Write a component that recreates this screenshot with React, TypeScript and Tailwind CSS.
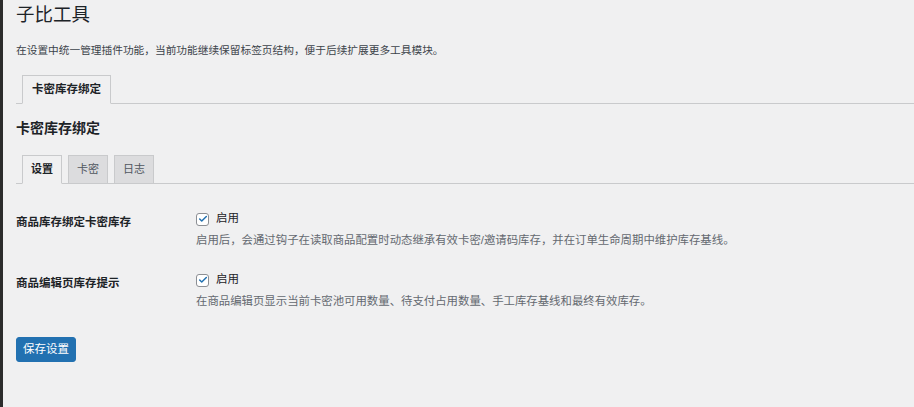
import { Check } from 'lucide-react'

const font = '[font-family:"Liberation_Sans","Noto_Sans_CJK_SC",sans-serif]'

function Checkbox() {
    return (
        <span className="w-[13px] h-[13px] shrink-0 rounded-[3px] border border-[#8c8f94] bg-white flex items-center justify-center">
            <Check size={10} strokeWidth={3.5} className="text-[#2271b1]" />
        </span>
    )
}

function SettingRow({ label, desc, first }: { label: string; desc: string; first?: boolean }) {
    return (
        <div className={`flex ${first ? '' : 'mt-[22px]'}`}>
            <div className="w-[180px] shrink-0 pt-[5px] text-[11.5px] leading-[16px] font-bold text-[#1d2327]">
                {label}
            </div>
            <div className="flex flex-col">
                <label className="h-[20px] flex items-center gap-[7px] text-[11.5px] text-[#1d2327]">
                    <Checkbox />
                    <span>启用</span>
                </label>
                <p className="mt-[3px] text-[11.4px] leading-[16px] text-[#646970]">{desc}</p>
            </div>
        </div>
    )
}

export default function App() {
    const tabs = ['设置', '卡密', '日志']

    return (
        <div className={`flex min-h-[407px] bg-[#f0f0f1] ${font}`}>
            {/* admin menu edge */}
            <div className="w-[3px] shrink-0 bg-[#2c2c2c]" />

            <div className="flex-1 pl-[13px]">
                <h1 className="mt-[2px] text-[18.5px] leading-[26px] font-normal text-[#1d2327]">子比工具</h1>
                <p className="mt-[14px] text-[10.7px] leading-[16px] text-[#3c434a]">
                    在设置中统一管理插件功能，当前功能继续保留标签页结构，便于后续扩展更多工具模块。
                </p>

                {/* top-level tab */}
                <div className="mt-[17px] flex border-b border-[#c9cacc]">
                    <div className="ml-[6px] -mb-px h-[29px] px-[9px] flex items-center border border-[#c9cacc] border-b-[#f0f0f1] bg-[#f0f0f1] text-[11.5px] font-bold text-[#1d2327]">
                        卡密库存绑定
                    </div>
                </div>

                <h2 className="mt-[14px] text-[14px] leading-[20px] font-bold text-[#1d2327]">卡密库存绑定</h2>

                {/* sub tabs */}
                <div className="mt-[17px] flex border-b border-[#c9cacc]">
                    {tabs.map((t, i) => (
                        <div
                            key={t}
                            className={
                                i === 0
                                    ? 'ml-[6px] -mb-px h-[29px] px-[8px] flex items-center border border-[#c9cacc] border-b-[#f0f0f1] bg-[#f0f0f1] text-[11px] font-bold text-[#1d2327]'
                                    : 'ml-[6px] h-[28px] px-[8px] flex items-center border border-b-0 border-[#c9cacc] bg-[#dcdcde] text-[11px] text-[#50575e]'
                            }
                        >
                            {t}
                        </div>
                    ))}
                </div>

                <div className="mt-[25px]">
                    <SettingRow
                        first
                        label="商品库存绑定卡密库存"
                        desc="启用后，会通过钩子在读取商品配置时动态继承有效卡密/邀请码库存，并在订单生命周期中维护库存基线。"
                    />
                    <SettingRow
                        label="商品编辑页库存提示"
                        desc="在商品编辑页显示当前卡密池可用数量、待支付占用数量、手工库存基线和最终有效库存。"
                    />
                </div>

                <button className="mt-[28px] h-[25px] w-[60px] rounded-[3px] border border-[#2271b1] bg-[#2271b1] text-[11.5px] text-white">
                    保存设置
                </button>
            </div>
        </div>
    )
}
